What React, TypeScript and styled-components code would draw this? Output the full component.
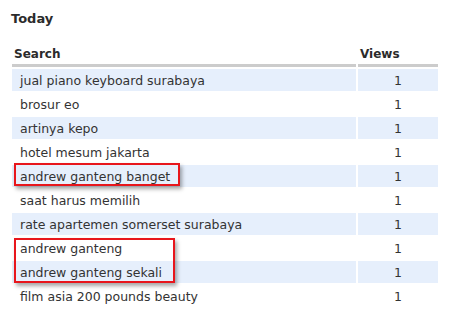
import styled, { createGlobalStyle } from "styled-components";

const GlobalStyle = createGlobalStyle`
  body {
    margin: 0;
    background: #ffffff;
    font-family: "DejaVu Sans", Verdana, sans-serif;
    color: #333333;
  }
`;

interface Row {
  term: string;
  views: number;
}

const rows: Row[] = [
  { term: "jual piano keyboard surabaya", views: 1 },
  { term: "brosur eo", views: 1 },
  { term: "artinya kepo", views: 1 },
  { term: "hotel mesum jakarta", views: 1 },
  { term: "andrew ganteng banget", views: 1 },
  { term: "saat harus memilih", views: 1 },
  { term: "rate apartemen somerset surabaya", views: 1 },
  { term: "andrew ganteng", views: 1 },
  { term: "andrew ganteng sekali", views: 1 },
  { term: "film asia 200 pounds beauty", views: 1 },
];

// red boxes somebody drew over the screenshot: [left, top, width, height]
const marks = [
  [14, 163, 166, 23],
  [14, 238, 161, 45],
];

const App = () => {
  return (
    <Page>
      <GlobalStyle />
      <Title>Today</Title>
      <TableWrap>
        <Table>
          <thead>
            <tr>
              <Head>Search</Head>
              <Head $narrow>Views</Head>
            </tr>
          </thead>
          <tbody>
            {rows.map((row, i) => (
              <tr key={i}>
                <Cell $alt={i % 2 === 0}>{row.term}</Cell>
                <Cell $alt={i % 2 === 0} $center>
                  {row.views}
                </Cell>
              </tr>
            ))}
          </tbody>
        </Table>
        {marks.map(([left, top, width, height], i) => (
          <Mark key={i} style={{ left, top: top - 44, width, height }} />
        ))}
      </TableWrap>
    </Page>
  );
};

const Page = styled.div`
  width: 450px;
  height: 321px;
  padding: 10px 0 0 0;
  box-sizing: border-box;
`;

const Title = styled.h3`
  margin: 0 0 0 11px;
  font-size: 13px;
  font-weight: bold;
  line-height: 18px;
  color: #2b2b2b;
`;

const TableWrap = styled.div`
  position: relative;
  margin-top: 16px;
`;

const Table = styled.table`
  margin-left: 10px;
  width: 430px;
  border-collapse: separate;
  border-spacing: 2px;
  font-size: 12.5px;
`;

const Head = styled.th<{ $narrow?: boolean }>`
  text-align: left;
  font-weight: bold;
  font-size: 12px;
  color: #2b2b2b;
  padding: 0 2px 2px 2px;
  height: 16px;
  width: ${(p) => (p.$narrow ? "76px" : "auto")};
  border-bottom: 3px solid #cccccc;
`;

const Cell = styled.td<{ $alt?: boolean; $center?: boolean }>`
  height: 22px;
  padding: 0 8px;
  box-sizing: border-box;
  background: ${(p) => (p.$alt ? "#e6effc" : "#ffffff")};
  text-align: ${(p) => (p.$center ? "center" : "left")};
  color: #333333;
  white-space: nowrap;
`;

const Mark = styled.div`
  position: absolute;
  box-sizing: border-box;
  border: 2px solid #e8161c;
  box-shadow: 2px 3px 4px rgba(0, 0, 0, 0.35);
`;

export default App;
